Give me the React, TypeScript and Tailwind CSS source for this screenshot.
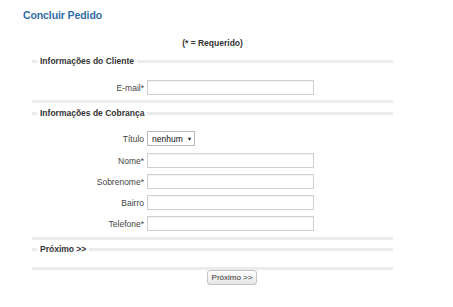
import React from "react";

function Legend({ children }: { children: React.ReactNode }) {
  return (
    <div className="flex h-[10px] items-center">
      <div className="h-[3px] w-[5px] bg-[#ebebeb]" />
      <span className="px-[3px] text-[8.5px] font-bold leading-[10px] text-[#333]">{children}</span>
      <div className="h-[3px] flex-1 bg-[#ebebeb]" />
    </div>
  );
}

function Line() {
  return <div className="h-[3px] w-full bg-[#ebebeb]" />;
}

function Row({ label, children }: { label: string; children: React.ReactNode }) {
  return (
    <div className="flex items-center">
      <div className="w-[115px] shrink-0 pr-[3px] text-right text-[8.5px] leading-[10px] text-[#444]">{label}</div>
      {children}
    </div>
  );
}

function Input() {
  return <div className="h-[15px] w-[167px] border border-[#d0d0d0] bg-white shadow-[inset_0_1px_1px_rgba(0,0,0,0.05)]" />;
}

export default function App() {
  return (
    <div className="h-[307px] w-[453px] bg-white font-['Liberation_Sans',Arial,sans-serif] text-[#333]">
      <div className="pl-[23px] pt-[9px] text-[10.5px] font-bold leading-[13px] tracking-[-0.1px] text-[#2f6da6]">Concluir Pedido</div>
      <div className="ml-[32px] w-[361px]">
        <div className="mt-[16px] text-center text-[8.5px] font-bold leading-[10px] text-[#333]">(* = Requerido)</div>

        <div className="mt-[8px]">
          <Legend>Informações do Cliente</Legend>
        </div>
        <div className="mt-[14px]">
          <Row label="E-mail*">
            <Input />
          </Row>
        </div>
        <div className="mt-[5px]">
          <Line />
        </div>

        <div className="mt-[5px]">
          <Legend>Informações de Cobrança</Legend>
        </div>
        <div className="mt-[13px] flex flex-col gap-[6px]">
          <Row label="Título">
            <div className="flex h-[15px] w-[48px] items-center border border-[#b8b8b8] bg-white pl-[4px]">
              <span className="text-[8.5px] leading-[10px] text-[#111]">nenhum</span>
              <span className="ml-[4px] text-[5.5px] leading-[6px] text-[#222]">▼</span>
            </div>
          </Row>
          <div className="mt-[1px]">
            <Row label="Nome*">
              <Input />
            </Row>
          </div>
          <Row label="Sobrenome*">
            <Input />
          </Row>
          <Row label="Bairro">
            <Input />
          </Row>
          <Row label="Telefone*">
            <Input />
          </Row>
        </div>
        <div className="mt-[6px]">
          <Line />
        </div>

        <div className="mt-[4px]">
          <Legend>Próximo &gt;&gt;</Legend>
        </div>
        <div className="mt-[13px]">
          <Line />
        </div>

        <div className="ml-[175px] mt-0">
          <button className="flex h-[15px] w-[50px] items-center justify-center rounded-[3px] border border-[#c4c4c4] bg-gradient-to-b from-white to-[#e6e6e6] text-[8px] leading-[10px] text-[#333]">
            Próximo &gt;&gt;
          </button>
        </div>
      </div>
    </div>
  );
}
